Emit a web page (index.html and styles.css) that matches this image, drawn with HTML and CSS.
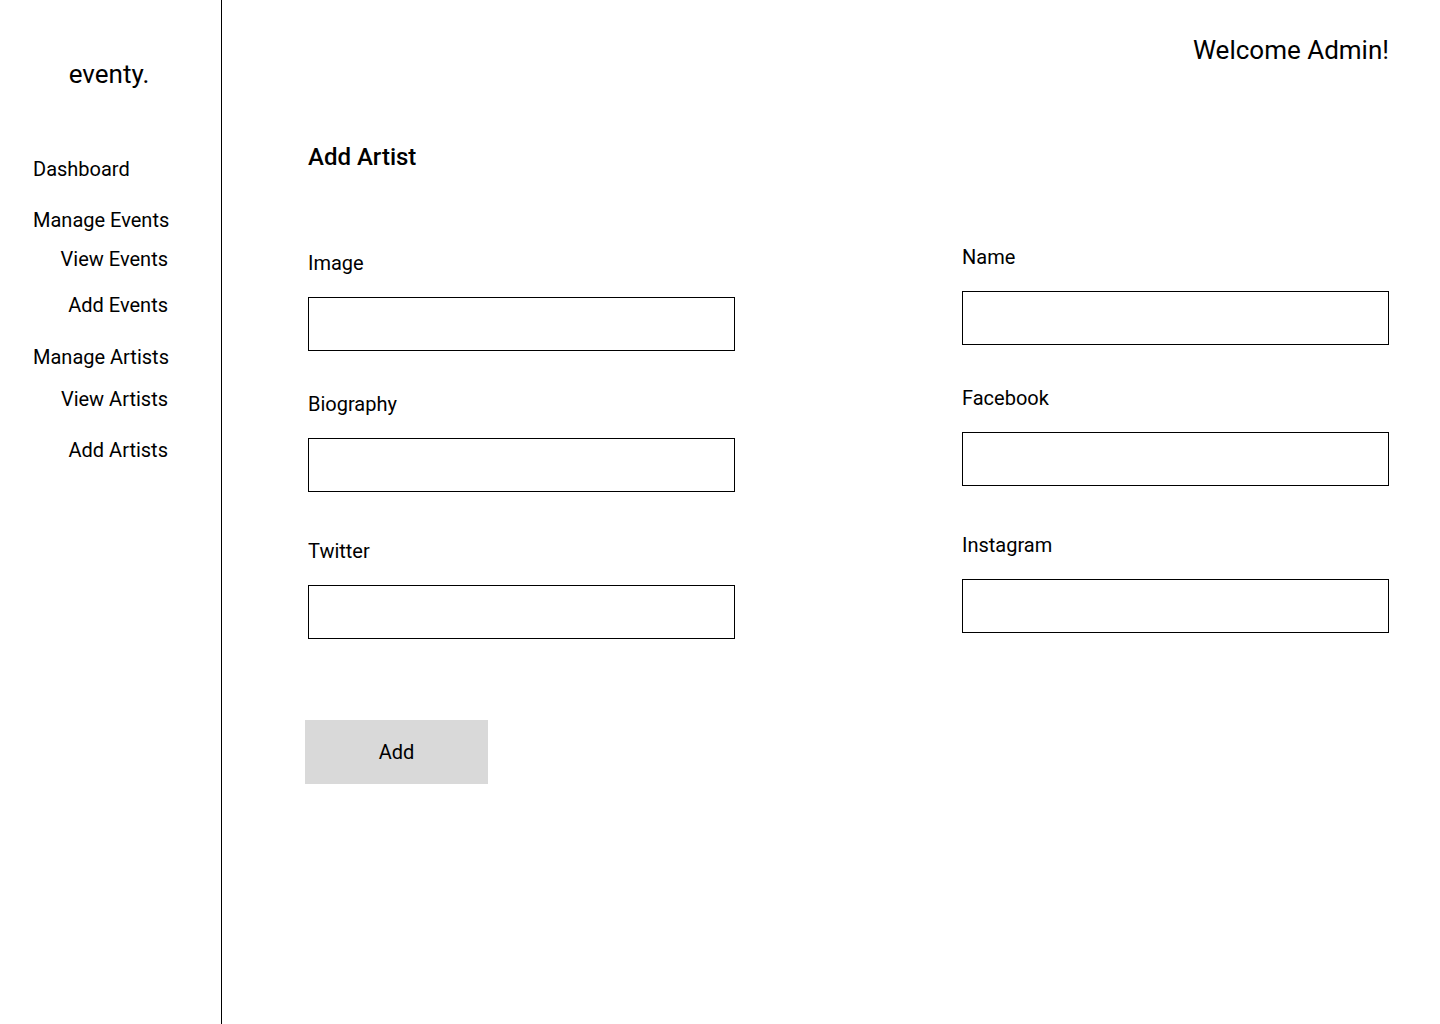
FILE: index.html
```html
<!DOCTYPE html>
<html lang="en">
<head>
<meta charset="utf-8">
<title>eventy. - Add Artist</title>
<link rel="stylesheet" href="styles.css">
</head>
<body>
<div class="layout">
  <aside class="sidebar">
    <div class="logo">eventy.</div>
    <nav class="nav">
      <a class="nav-item main dash" href="#">Dashboard</a>
      <a class="nav-item main g1" href="#">Manage Events</a>
      <a class="nav-item sub s1" href="#">View Events</a>
      <a class="nav-item sub s2" href="#">Add Events</a>
      <a class="nav-item main g2" href="#">Manage Artists</a>
      <a class="nav-item sub s3" href="#">View Artists</a>
      <a class="nav-item sub s4" href="#">Add Artists</a>
    </nav>
  </aside>
  <main class="content">
    <header class="topbar">
      <div class="welcome">Welcome Admin!</div>
    </header>
    <h1 class="title">Add Artist</h1>
    <form class="form">
      <div class="col col-left">
        <label class="field">
          <span class="label">Image</span>
          <input class="input" type="text">
        </label>
        <label class="field field-mid">
          <span class="label">Biography</span>
          <input class="input" type="text">
        </label>
        <label class="field field-last">
          <span class="label">Twitter</span>
          <input class="input" type="text">
        </label>
      </div>
      <div class="col col-right">
        <label class="field">
          <span class="label">Name</span>
          <input class="input" type="text">
        </label>
        <label class="field field-mid">
          <span class="label">Facebook</span>
          <input class="input" type="text">
        </label>
        <label class="field field-last">
          <span class="label">Instagram</span>
          <input class="input" type="text">
        </label>
      </div>
    </form>
    <button class="btn" type="button">Add</button>
  </main>
</div>
</body>
</html>
```

FILE: styles.css
```css
* { box-sizing: border-box; }
html, body {
  margin: 0;
  padding: 0;
  background: #fff;
  color: #000;
  font-family: Roboto, "Liberation Sans", Arial, sans-serif;
}
.layout {
  display: flex;
  min-height: 1024px;
}
.sidebar {
  width: 222px;
  flex: 0 0 222px;
  border-right: 1px solid #000;
  padding: 60px 53px 0 33px;
}
.logo {
  margin: 0 -50px 0 -33px;
  text-align: center;
  font-size: 26px;
  line-height: 28px;
}
.nav {
  display: flex;
  flex-direction: column;
  margin-top: 70px;
}
.nav-item {
  display: block;
  color: #000;
  text-decoration: none;
  font-size: 20px;
  line-height: 23px;
  white-space: nowrap;
}
.nav-item.sub { text-align: right; }
.g1 { margin-top: 28px; }
.s1 { margin-top: 16px; }
.s2 { margin-top: 23px; }
.g2 { margin-top: 29px; }
.s3 { margin-top: 19px; }
.s4 { margin-top: 28px; }

.content {
  flex: 1;
  padding: 36px 52px 0 86px;
}
.topbar {
  display: flex;
  justify-content: flex-end;
}
.welcome {
  font-size: 26px;
  line-height: 28px;
}
.title {
  margin: 80px 0 0;
  font-size: 24px;
  line-height: 26px;
  font-weight: 500;
}
.form {
  display: grid;
  grid-template-columns: 427px 427px;
  column-gap: 227px;
  margin-top: 76px;
  align-items: start;
}
.col-left { padding-top: 6px; }
.field {
  display: flex;
  flex-direction: column;
  margin-bottom: 42px;
}
.field-mid { margin-bottom: 48px; }
.field-last { margin-bottom: 0; }
.label {
  font-size: 20px;
  line-height: 23px;
}
.input {
  margin-top: 22px;
  width: 427px;
  height: 54px;
  border: 1px solid #000;
  border-radius: 0;
  background: #fff;
  padding: 0 12px;
  font: inherit;
  outline: none;
}
.btn {
  display: block;
  margin: 81px 0 0 -3px;
  width: 183px;
  height: 64px;
  border: none;
  border-radius: 0;
  background: #d9d9d9;
  color: #000;
  font-family: inherit;
  font-size: 20px;
  cursor: pointer;
}
```
